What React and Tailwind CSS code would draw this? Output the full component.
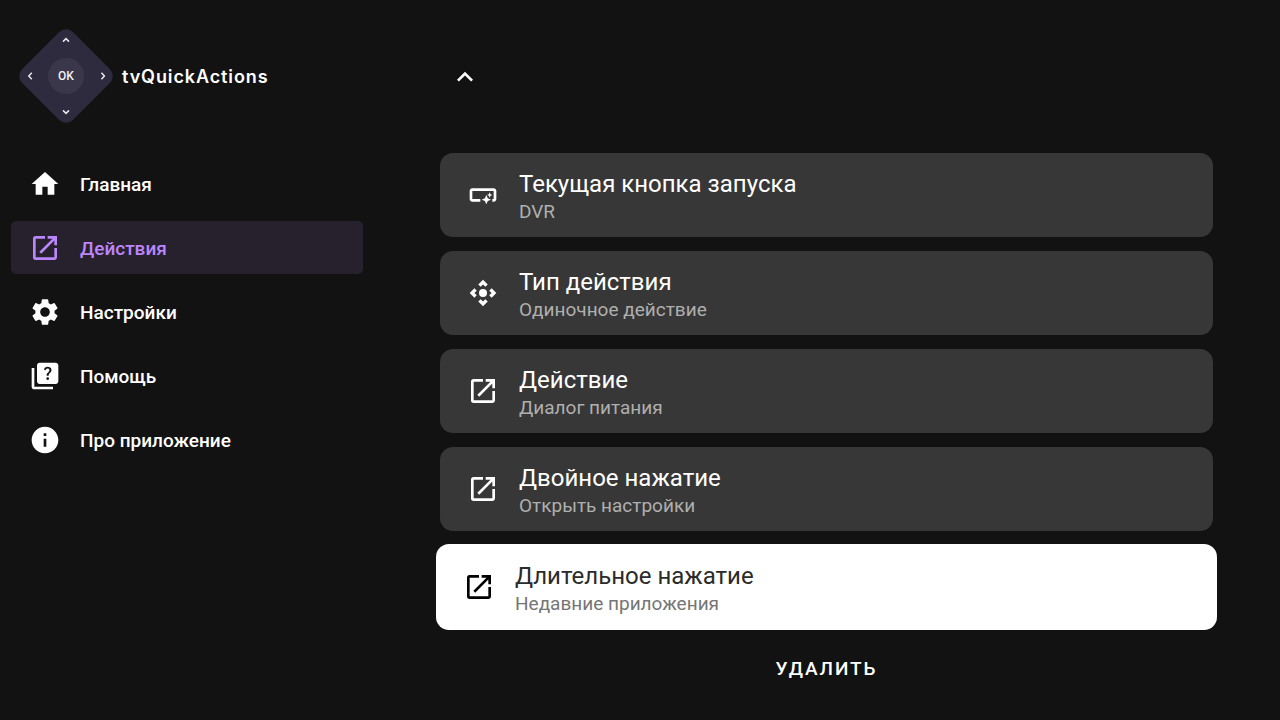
import React, { useState } from 'react';
import {
  MdHome,
  MdOpenInNew,
  MdSettings,
  MdQuiz,
  MdInfo,
  MdSmartButton,
  MdControlCamera,
  MdKeyboardArrowUp
} from 'react-icons/md';

const MENU = [
  { key: 'home', label: 'Главная', icon: MdHome },
  { key: 'actions', label: 'Действия', icon: MdOpenInNew },
  { key: 'settings', label: 'Настройки', icon: MdSettings },
  { key: 'help', label: 'Помощь', icon: MdQuiz },
  { key: 'about', label: 'Про приложение', icon: MdInfo }
];

const OPTIONS = [
  { key: 'button', title: 'Текущая кнопка запуска', value: 'DVR', icon: MdSmartButton },
  { key: 'type', title: 'Тип действия', value: 'Одиночное действие', icon: MdControlCamera },
  { key: 'single', title: 'Действие', value: 'Диалог питания', icon: MdOpenInNew },
  { key: 'double', title: 'Двойное нажатие', value: 'Открыть настройки', icon: MdOpenInNew },
  { key: 'long', title: 'Длительное нажатие', value: 'Недавние приложения', icon: MdOpenInNew }
];

const Logo = () => (
  <svg className="h-24 w-24 shrink-0" viewBox="0 0 96 96" fill="none" aria-hidden="true">
    <rect x="12" y="12" width="72" height="72" rx="10" fill="#2d2b3d" transform="rotate(45 48 48)" />
    <circle cx="48" cy="48" r="18" fill="#393749" />
    <g stroke="#e8e8ee" strokeWidth="1.5">
      <path d="M45 13.6L48 10.6l3 3" />
      <path d="M45 82.4L48 85.4l3-3" />
      <path d="M13.8 44.8L10.8 48l3 3.2" />
      <path d="M83.4 44.8l3 3.2-3 3.2" />
    </g>
    <text
      x="48"
      y="52"
      textAnchor="middle"
      fill="#f2f2f5"
      className="font-['Roboto',sans-serif] text-[12px] font-medium"
    >
      OK
    </text>
  </svg>
);

const App = () => {
  const [page, setPage] = useState('actions');
  const [focused, setFocused] = useState('long');

  return (
    <div className="flex min-h-screen bg-[#121212] font-['Roboto',sans-serif] text-white">
      {/* Sidebar */}
      <aside className="w-[373px] shrink-0 pt-7 pr-[10px] pl-[11px]">
        <div className="flex items-center gap-2 pl-[7px]">
          <Logo />
          <h1 className="pt-0.5 font-['Inter',sans-serif] text-lg font-semibold tracking-wider">
            tvQuickActions
          </h1>
        </div>
        <nav className="mt-[33px] flex flex-col gap-[11px]">
          {MENU.map(({ key, label, icon: Icon }) => (
            <button
              key={key}
              className={`flex h-[53px] w-full items-center gap-[19px] rounded-[5px] pl-[18px] text-left text-[19px] font-medium ${
                key === page ? 'bg-[#27212e] text-[#bb86fc]' : 'text-white'
              }`}
              onClick={() => setPage(key)}
            >
              <Icon className="h-8 w-8 shrink-0" />
              <span className="pt-[3px]">{label}</span>
            </button>
          ))}
        </nav>
      </aside>

      {/* Action options */}
      <main className="flex min-w-0 flex-1 flex-col px-[67px] pt-[61px]">
        <button aria-label="Назад" className="ml-[9px] self-start">
          <MdKeyboardArrowUp className="h-8 w-8" />
        </button>
        <ul className="mt-[60px] flex flex-col gap-[14px]">
          {OPTIONS.map(({ key, title, value, icon: Icon }) => (
            <li key={key} className={key === focused ? '-mx-1 -my-px' : ''}>
              <button
                className={`flex w-full items-center gap-5 rounded-[13px] pl-[27px] text-left ${
                  key === focused ? 'h-[86px] bg-white text-black' : 'h-[84px] bg-[#373737] text-white'
                }`}
                onClick={() => setFocused(key)}
              >
                <Icon className="h-8 w-8 shrink-0" />
                <span className="flex flex-col pt-0.5">
                  <span className={`text-2xl leading-8 ${key === focused ? 'text-[#2b2b2b]' : ''}`}>
                    {title}
                  </span>
                  <span
                    className={`text-[19px] leading-6 ${
                      key === focused ? 'text-[#757575]' : 'text-[#afafaf]'
                    }`}
                  >
                    {value}
                  </span>
                </span>
              </button>
            </li>
          ))}
        </ul>
        <button className="mt-4 h-12 self-center px-5 text-[19px] font-medium tracking-widest uppercase">
          Удалить
        </button>
      </main>
    </div>
  );
};

export default App;
